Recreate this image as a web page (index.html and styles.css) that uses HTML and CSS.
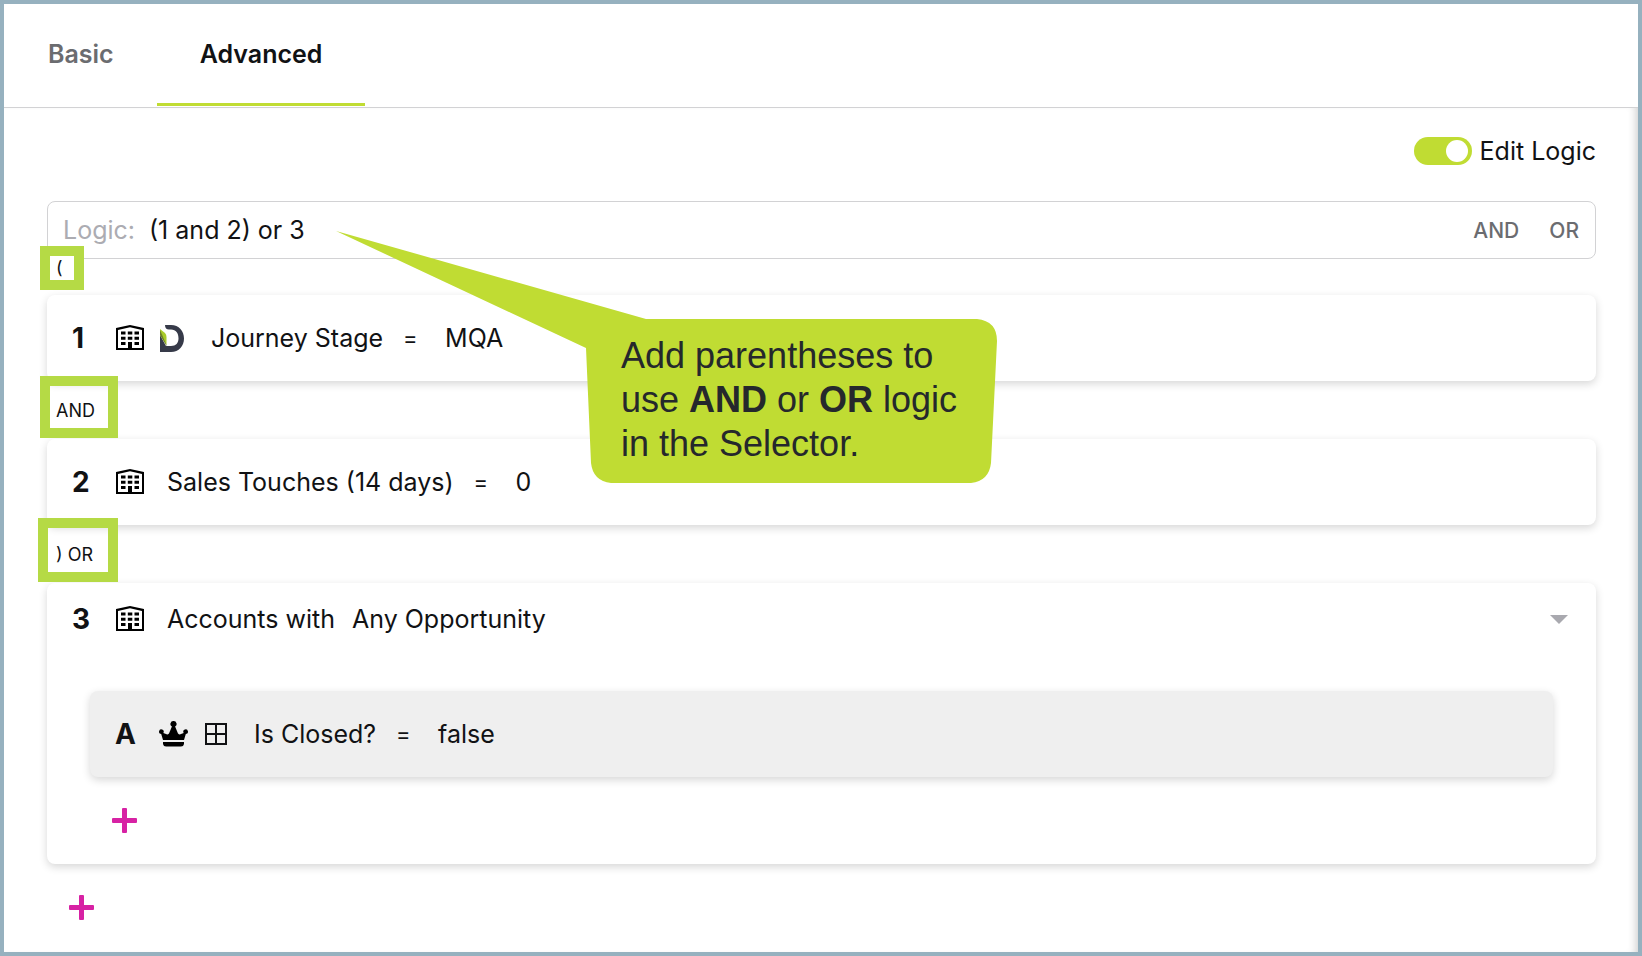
FILE: index.html
```html
<!DOCTYPE html>
<html lang="en">
<head>
  <meta charset="UTF-8">
  <meta name="viewport" content="width=device-width, initial-scale=1">
  <title>Selector - Advanced</title>
  <link rel="stylesheet" href="styles.css">
</head>
<body>
  <svg class="defs" aria-hidden="true">
    <symbol id="building" viewBox="0 0 28 26">
      <path fill-rule="evenodd" d="M0 3L14 0L28 3V25H0ZM2 5V23H12V17H16V23H26V5L14 2.300Z"/>
      <path d="M5 6.500h4.500v3H5zM11.800 6.500h4.500v3h-4.500zM18.500 6.500h4.500v3h-4.500zM5 11.800h4.500v3H5zM11.800 11.800h4.500v3h-4.500zM18.500 11.800h4.500v3h-4.500zM5 17h4.500v3H5zM18.500 17h4.500v3h-4.500z"/>
    </symbol>
    <symbol id="plus" viewBox="0 0 25 25">
      <rect x="10" width="5" height="25" rx="1"/>
      <rect y="10" width="25" height="5" rx="1"/>
    </symbol>
  </svg>

  <div class="frame">
    <nav class="tabs" role="tablist">
      <button class="tab" role="tab" aria-selected="false">Basic</button>
      <button class="tab active" role="tab" aria-selected="true">Advanced</button>
    </nav>

    <main class="content">
      <div class="toolbar">
        <input type="checkbox" id="editLogic" class="toggle" checked>
        <label for="editLogic">Edit Logic</label>
      </div>

      <div class="logic">
        <label for="logicInput">Logic:</label>
        <input type="text" id="logicInput" value="(1 and 2) or 3">
        <button>AND</button>
        <button>OR</button>
      </div>

      <div class="joiner joiner-open"><span class="token">(</span></div>

      <section class="card row">
        <span class="num">1</span>
        <svg class="building"><use href="#building"/></svg>
        <svg class="brand" viewBox="0 0 24 27">
          <path fill="#363a49" d="M5 0H11C19 0 24 6 24 13.500C24 21 19 27 11 27H0V10L6 21H11C16 21 18.500 18 18.500 13.500C18.500 8 16 4.500 11 4.500H9C6.500 4.500 5 3 5 0Z"/>
          <path fill="#a9cb2b" d="M0 4L5 8Q6.500 9.500 6.500 12V20L0 10Z"/>
          <path fill="#6d7f2a" d="M0 10L0 5L6.500 20V21Z"/>
        </svg>
        <span class="field wide">Journey Stage</span>
        <span class="op">=</span>
        <span>MQA</span>
      </section>

      <div class="joiner"><span class="token and">AND</span></div>

      <section class="card row">
        <span class="num">2</span>
        <svg class="building"><use href="#building"/></svg>
        <span class="field">Sales Touches (14 days)</span>
        <span class="op">=</span>
        <span>0</span>
      </section>

      <div class="joiner joiner-close"><span class="token or">) OR</span></div>

      <section class="card">
        <div class="row group-head">
          <span class="num">3</span>
          <svg class="building"><use href="#building"/></svg>
          <span class="field">Accounts with</span>
          <span class="object">Any Opportunity</span>
          <button class="caret" aria-label="Collapse">
            <svg viewBox="0 0 18 9"><path d="M0 0H18L9 9Z"/></svg>
          </button>
        </div>
        <div class="group-body">
          <div class="card row sub">
            <span class="num">A</span>
            <svg class="crown" viewBox="0 0 29 26">
              <path d="M14.500 0a3 3 0 0 1 1.600 5.600L19 12.500Q20.500 14 22 13L24.700 11.900A2.300 2.300 0 1 1 26.800 13L25 19H4L2.200 13A2.300 2.300 0 1 1 4.300 11.900L7 13Q8.500 14 10 12.500L12.900 5.600A3 3 0 0 1 14.500 0Z"/>
              <path d="M4 21H25V23Q24.500 25.500 22 25.500H7Q4.500 25.500 4 23Z"/>
            </svg>
            <svg class="grid" viewBox="0 0 22 22">
              <path d="M1 1H21V21H1ZM11 1V21M1 11H21"/>
            </svg>
            <span class="field wide">Is Closed?</span>
            <span class="op">=</span>
            <span>false</span>
          </div>
          <button class="add" aria-label="Add condition"><svg><use href="#plus"/></svg></button>
        </div>
      </section>

      <button class="add" aria-label="Add rule"><svg><use href="#plus"/></svg></button>
    </main>

    <aside class="callout">
      <svg viewBox="0 0 661 252" aria-hidden="true">
        <path d="M0 0L310 88H641Q661 90 661 110L655 232Q653 250 635 252H275Q257 250 255 232L250 117Z"/>
      </svg>
      <p>Add parentheses to<br>use <b>AND</b> or <b>OR</b> logic<br>in the Selector.</p>
    </aside>
  </div>
</body>
</html>
```
FILE: styles.css
```css
* {
  box-sizing: border-box;
}

:root {
  --lime: #c0dc33;
  --ring: #b5da45;
  --pink: #d722a4;
  --text: #111214;
  --muted: #6b6c70;
  --line: #d2d2d4;
}

body {
  margin: 0;
  font-family: Inter, "Liberation Sans", sans-serif;
  font-size: 25px;
  color: var(--text);
}

button, input {
  font-family: inherit;
  color: inherit;
}

button {
  padding: 0;
  border: none;
  background: none;
  cursor: pointer;
}

.defs {
  position: absolute;
  width: 0;
  height: 0;
}

.frame {
  position: relative;
  display: flex;
  flex-direction: column;
  min-height: 100vh;
  border: 4px solid #96b1bf;
  background: #fff;
}

/* tabs */
.tabs {
  display: flex;
  height: 104px;
  padding: 0 0 1px 1px;
  border-bottom: 1px solid var(--line);
}

.tab {
  padding: 0 43px;
  border-bottom: 3px solid transparent;
  font-size: 25px;
  font-weight: 600;
  color: var(--muted);
}

.tab.active {
  color: var(--text);
  border-bottom-color: var(--lime);
}

.content {
  flex: 1;
  padding: 28px 42px 8px 43px;
  box-shadow: inset -8px 0 8px -6px rgba(0, 0, 0, 0.2);
}

.toolbar {
  display: flex;
  justify-content: flex-end;
  align-items: center;
  gap: 8px;
  height: 30px;
  margin-bottom: 35px;
}

.toggle {
  appearance: none;
  display: flex;
  justify-content: flex-end;
  width: 58px;
  height: 28px;
  margin: 0;
  padding: 3px 4px;
  border-radius: 14px;
  background: var(--lime);
  cursor: pointer;
}

.toggle::before {
  content: "";
  width: 22px;
  height: 22px;
  border-radius: 50%;
  background: #fff;
}

.toggle:not(:checked) {
  justify-content: flex-start;
  background: #bbb;
}

/* logic text box */
.logic {
  display: flex;
  align-items: center;
  height: 58px;
  padding: 0 16px 0 15px;
  border: 1px solid var(--line);
  border-radius: 8px;
}

.logic label {
  color: #acacb2;
}

.logic input {
  flex: 1;
  min-width: 0;
  padding: 0 14px;
  border: none;
  outline: none;
  background: none;
  font-size: 25px;
}

.logic button {
  margin-left: 30px;
  font-size: 21px;
  font-weight: 500;
  color: var(--muted);
}

/* joining words between the cards */
.joiner {
  display: flex;
  height: 58px;
  padding-top: 5px;
  font-size: 18px;
}

.joiner-open {
  height: 39px;
  margin-top: -3px;
  padding-top: 0;
}

.joiner-close {
  padding-top: 3px;
}

.token {
  position: relative;
  width: 24px;
  height: 24px;
  margin-left: 3px;
  padding-left: 6px;
  background: #fff;
  outline: 10px solid var(--ring);
  line-height: 24px;
}

.token.and {
  width: 58px;
  height: 42px;
  background: none;
  line-height: 50px;
}

.token.or {
  width: 60px;
  height: 44px;
  margin-left: 1px;
  padding-left: 8px;
  background: none;
  line-height: 54px;
}

/* cards */
.card {
  border-radius: 8px;
  background: #fff;
  box-shadow: 0 3px 8px rgba(0, 0, 0, 0.16);
}

.row {
  display: flex;
  align-items: center;
  min-height: 86px;
  padding: 0 25px;
}

.num {
  width: 44px;
  font-size: 28px;
  font-weight: 700;
}

.building {
  width: 28px;
  height: 26px;
}

.brand {
  width: 24px;
  height: 27px;
  margin-left: 16px;
}

.field {
  margin-left: 23px;
}

.field.wide {
  margin-left: 27px;
}

.op {
  width: 42px;
  margin-left: 20px;
  font-size: 22px;
}

.object {
  margin-left: 17px;
}

.group-head {
  min-height: 72px;
}

.caret {
  margin-left: auto;
  padding: 3px;
}

.caret svg {
  display: block;
  width: 18px;
  height: 9px;
  fill: #a9a9af;
}

.group-body {
  padding: 36px 43px 9px;
}

.sub {
  background: #efefef;
}

.crown {
  width: 29px;
  height: 26px;
}

.grid {
  width: 22px;
  height: 22px;
  margin-left: 17px;
  fill: none;
  stroke: var(--text);
  stroke-width: 2;
}

.add {
  display: block;
  margin: 9px 0 0 0;
  padding: 22px;
}

.add svg {
  display: block;
  width: 25px;
  height: 25px;
  fill: var(--pink);
}

/* callout lying over the cards */
.callout {
  position: absolute;
  top: 227px;
  left: 332px;
  width: 661px;
  padding: 103px 0 0 285px;
  font-family: "Liberation Sans", Arial, sans-serif;
  font-size: 36px;
  line-height: 44px;
  color: #25282c;
}

.callout svg {
  position: absolute;
  top: 0;
  left: 0;
  width: 661px;
  height: 252px;
  fill: var(--lime);
}

.callout p {
  position: relative;
  margin: 0;
}
```
